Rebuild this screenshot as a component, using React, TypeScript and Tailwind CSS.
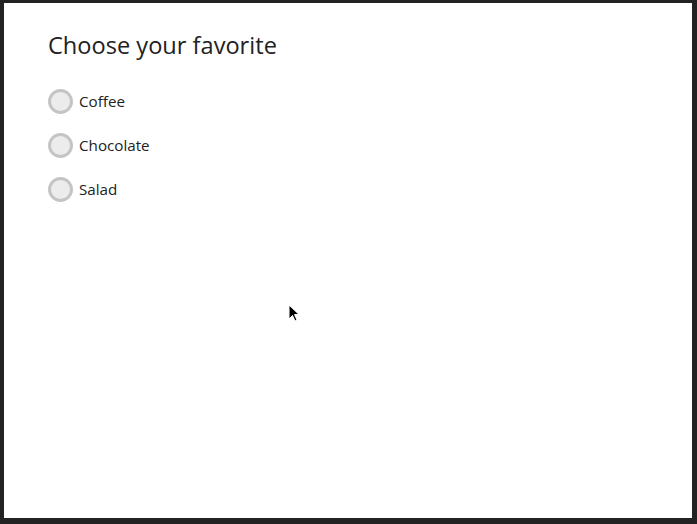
const options = ["Coffee", "Chocolate", "Salad"];

const App = () => {
  return (
    <div className="h-[524px] w-[697px] bg-[#222] pt-[3px] pl-[4px] pr-[5px] pb-[6px]">
      <div className="relative h-full w-full bg-white px-[44px] pt-[26px] font-['Open_Sans',sans-serif] text-[#222]">
        <h1 className="text-[23.6px] leading-[32px]">Choose your favorite</h1>
        <div className="mt-[28px] flex flex-col gap-[19px]">
          {options.map((o) => (
            <label key={o} className="flex items-center gap-[6px]">
              <span className="h-[25px] w-[25px] rounded-full border-[3px] border-[#c4c4c4] bg-[#ececec]" />
              <span className="text-[15.2px] leading-[25px]">{o}</span>
            </label>
          ))}
        </div>
        <svg className="absolute left-[284px] top-[301px]" width="14" height="20" viewBox="0 0 14 20">
          <path d="M1 1 L1 15 L4.5 11.5 L7 17 L9 16 L6.5 10.5 L11 10.5 Z" fill="#000" stroke="#fff" strokeWidth="1" />
        </svg>
      </div>
    </div>
  );
};

export default App;
